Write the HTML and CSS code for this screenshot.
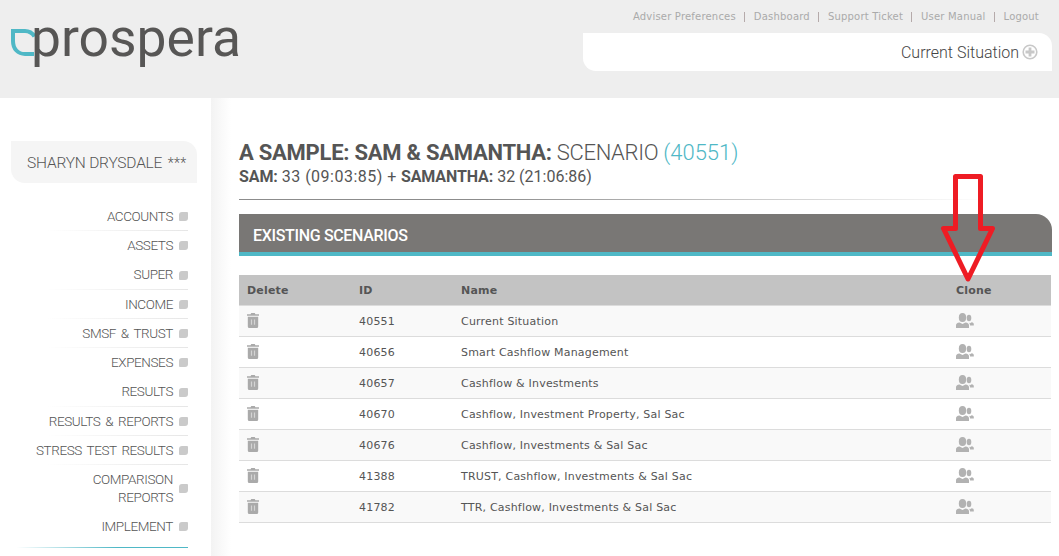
FILE: index.html
```html
<!DOCTYPE html>
<html lang="en">

<head>
    <meta charset="UTF-8">
    <meta name="viewport" content="width=device-width, initial-scale=1.0">
    <title>Prospera - Scenarios</title>
    <link rel="stylesheet" href="styles.css">
</head>

<body>
    <!-- shared icons -->
    <svg class="sprite">
        <symbol id="trash" viewBox="0 0 12 15">
            <path d="M0 1.2h3.6L4.2 0h3.6l.6 1.2H12v1.6H0z M.8 3.8h10.4V13.5a1.5 1.5 0 0 1-1.5 1.5H2.3A1.5 1.5 0 0 1 .8 13.5z" fill="#aaa"/>
            <path d="M4.5 6.5v5.2M7.5 6.5v5.2" stroke="#d4d4d4" stroke-width="1.2"/>
        </symbol>
        <symbol id="people" viewBox="0 0 18 15">
            <g fill="#b2b2b2">
                <ellipse cx="6.5" cy="4.5" rx="3.7" ry="4.5"/>
                <ellipse cx="13" cy="5" rx="2.3" ry="3.3"/>
                <path d="M0 15v-2.600c0-1.800 1-2.600 3.500-2.900l3 1.400 3-1.400c2.400.3 3.500 1.100 3.500 2.900V15z"/>
                <path d="M12.800 9.600l1.200.7 1.700-1c1.500.3 2.100.8 2.100 1.800v1.500h-3.700c-.1-1.200-.4-2.100-1.300-3z"/>
            </g>
        </symbol>
    </svg>

    <div class="header">
        <svg class="logo" width="232" height="60" viewBox="0 0 232 60">
            <path d="M24.500 16.500C22 12.500 19 11 15 11H3v10c0 8 5 13 12 13h9" fill="none" stroke="#4fb8c6" stroke-width="4"/>
            <text x="21" y="36" textLength="210" lengthAdjust="spacingAndGlyphs">prospera</text>
        </svg>
        <div class="header-right">
            <ul class="top-nav">
                <li>Adviser Preferences</li>
                <li>Dashboard</li>
                <li>Support Ticket</li>
                <li>User Manual</li>
                <li>Logout</li>
            </ul>
            <div class="situation">
                <span>Current Situation</span>
                <svg width="16" height="16" viewBox="0 0 16 16" fill="none" stroke="#c8c8c8">
                    <circle cx="8" cy="8" r="6.800" stroke-width="1.600"/>
                    <path d="M8 3.500v9M3.500 8h9" stroke-width="2.800"/>
                </svg>
            </div>
        </div>
    </div>

    <div class="page">
        <div class="sidebar">
            <div class="user">SHARYN DRYSDALE <span>***</span></div>
            <ul class="menu">
                <li class="line">ACCOUNTS</li>
                <li>ASSETS</li>
                <li class="line tall">SUPER</li>
                <li class="line">INCOME</li>
                <li class="line">SMSF &amp; TRUST</li>
                <li>EXPENSES</li>
                <li class="line tall">RESULTS</li>
                <li class="line">RESULTS &amp; REPORTS</li>
                <li class="line">STRESS TEST RESULTS</li>
                <li class="double">COMPARISON<br>REPORTS</li>
                <li>IMPLEMENT</li>
            </ul>
            <div class="menu-end"></div>
        </div>

        <div class="content">
            <h1><b>A SAMPLE: SAM &amp; SAMANTHA:</b> SCENARIO <span>(40551)</span></h1>
            <h2><b>SAM:</b> <span>33 (09:03:85) +</span> <b>SAMANTHA:</b> 32 (21:06:86)</h2>
            <div class="rule"></div>
            <div class="panel-title">EXISTING SCENARIOS</div>
            <table>
                <thead>
                    <tr><th class="delete">Delete</th><th class="id">ID</th><th>Name</th><th class="clone">Clone</th></tr>
                </thead>
                <tbody>
                    <tr><td><svg class="trash"><use href="#trash"/></svg></td><td>40551</td><td>Current Situation</td><td><svg class="people"><use href="#people"/></svg></td></tr>
                    <tr><td><svg class="trash"><use href="#trash"/></svg></td><td>40656</td><td>Smart Cashflow Management</td><td><svg class="people"><use href="#people"/></svg></td></tr>
                    <tr><td><svg class="trash"><use href="#trash"/></svg></td><td>40657</td><td>Cashflow &amp; Investments</td><td><svg class="people"><use href="#people"/></svg></td></tr>
                    <tr><td><svg class="trash"><use href="#trash"/></svg></td><td>40670</td><td>Cashflow, Investment Property, Sal Sac</td><td><svg class="people"><use href="#people"/></svg></td></tr>
                    <tr><td><svg class="trash"><use href="#trash"/></svg></td><td>40676</td><td>Cashflow, Investments &amp; Sal Sac</td><td><svg class="people"><use href="#people"/></svg></td></tr>
                    <tr><td><svg class="trash"><use href="#trash"/></svg></td><td>41388</td><td>TRUST, Cashflow, Investments &amp; Sal Sac</td><td><svg class="people"><use href="#people"/></svg></td></tr>
                    <tr><td><svg class="trash"><use href="#trash"/></svg></td><td>41782</td><td>TTR, Cashflow, Investments &amp; Sal Sac</td><td><svg class="people"><use href="#people"/></svg></td></tr>
                </tbody>
            </table>
        </div>
    </div>

    <!-- arrow pointing at the Clone column -->
    <svg class="arrow" width="56" height="112" viewBox="0 0 56 112">
        <path d="M15.500 4.500h25v52h12L28 107 3.500 56.500h12z" fill="none" stroke="#ee1c24" stroke-width="5" stroke-linejoin="round"/>
    </svg>
</body>

</html>
```
FILE: styles.css
```css
* {
    box-sizing: border-box;
}

body {
    margin: 0;
    height: 556px;
    overflow: hidden;
    position: relative;
    background: #fff;
    color: #555;
    font-family: "DejaVu Sans", Verdana, sans-serif;
    font-size: 11px;
}

ul {
    list-style: none;
    margin: 0;
    padding: 0;
}

.sprite {
    display: none;
}

.header {
    display: flex;
    justify-content: space-between;
    height: 98px;
    padding: 0 7px 0 10px;
    background: #eee;
}

.logo {
    margin-top: 20px;
    overflow: visible;
}

.logo text {
    font-family: Roboto, sans-serif;
    font-size: 51px;
    fill: #575655;
}

.header-right {
    width: 469px;
}

.top-nav {
    display: flex;
    justify-content: flex-end;
    height: 33px;
    padding: 11px 13px 0 0;
    font-size: 10px;
    line-height: 12px;
    letter-spacing: 0.2px;
    color: #aaa;
}

.top-nav li + li {
    margin-left: 8px;
    padding-left: 10px;
    background: linear-gradient(#b5aaaa, #b5aaaa) 0 1px / 1px 10px no-repeat;
}

.situation {
    display: flex;
    align-items: center;
    justify-content: flex-end;
    gap: 3px;
    height: 38px;
    padding-right: 14px;
    background: #fff;
    border-radius: 0 13px 0 13px;
    font: 300 16px Roboto, sans-serif;
    color: #444;
}

.page {
    display: flex;
    height: 458px;
}

.sidebar {
    width: 211px;
    padding: 43px 0 0 11px;
    font-family: Roboto, sans-serif;
    font-weight: 300;
}

.user {
    width: 186px;
    height: 42px;
    padding-left: 16px;
    background: #f5f5f5;
    border-radius: 0 14px 0 14px;
    font-size: 15.5px;
    line-height: 44px;
    letter-spacing: -0.2px;
    white-space: nowrap;
}

.user span {
    margin-left: 2px;
    letter-spacing: 0.3px;
    font-size: 14px;
}

.menu {
    width: 177px;
    margin-top: 19px;
    font-size: 13.5px;
    line-height: 18px;
    letter-spacing: -0.4px;
    word-spacing: 2px;
    text-align: right;
}

.menu li {
    display: flex;
    align-items: center;
    justify-content: flex-end;
    gap: 6px;
    height: 29px;
    padding-bottom: 2px;
}

.menu li::after {
    content: "";
    position: relative;
    top: 1px;
    width: 9px;
    height: 9px;
    background: #cacaca;
    border-radius: 3px 1px 3px 1px;
}

.menu .line {
    background: linear-gradient(90deg, #fff 20%, #e6e6e6) bottom / 100% 1px no-repeat;
}

.menu .tall {
    height: 30px;
}

.menu .double {
    height: 47px;
}

.menu-end {
    width: 177px;
    height: 1px;
    margin-top: 6px;
    background: linear-gradient(90deg, #fff 3%, #4fb8c6 60%);
}

.content {
    flex: 1;
    padding: 41px 7px 0 28px;
    background: linear-gradient(90deg, #f3f3f3, #fff) left / 20px 100% no-repeat;
}

h1, h2 {
    margin: 0;
    font-family: Roboto, sans-serif;
    white-space: nowrap;
}

h1 b, h2 b {
    font-weight: 700;
}

h1 {
    height: 26px;
    font-size: 22px;
    font-weight: 300;
    line-height: 27px;
    letter-spacing: -0.35px;
}

h1 b {
    letter-spacing: -0.25px;
}

h1 span {
    color: #4fb8c6;
    letter-spacing: 0;
}

h2 {
    height: 24px;
    font-size: 16px;
    font-weight: 400;
    line-height: 23px;
}

h2 b {
    letter-spacing: -0.1px;
}

h2 span {
    letter-spacing: 0.5px;
}

.rule {
    height: 1px;
    margin-top: 10px;
    background: linear-gradient(90deg, #8c8c8c 30%, #fff 92%);
}

.panel-title {
    height: 42px;
    margin-top: 14px;
    padding-left: 14px;
    background: #797775;
    border-bottom: 4px solid #4fb8c6;
    border-radius: 0 16px 0 0;
    color: #fff;
    font: 500 16px/43px Roboto, sans-serif;
    letter-spacing: -0.33px;
}

table {
    width: 812px;
    margin-top: 19px;
    border-collapse: separate;
    border-spacing: 0;
    table-layout: fixed;
}

th, td {
    height: 31px;
    padding: 0 0 0 8px;
    border-bottom: 1px solid #dcdcdc;
    text-align: left;
    letter-spacing: 0.2px;
}

th {
    background: #c3c3c3;
}

tbody tr:nth-child(odd) {
    background: #f9f9f9;
}

.delete {
    width: 112px;
}

.id {
    width: 102px;
}

.clone {
    width: 103px;
}

td svg {
    display: block;
    margin-bottom: 2px;
}

.trash {
    width: 12px;
    height: 15px;
}

.people {
    width: 18px;
    height: 15px;
}

.arrow {
    position: absolute;
    left: 940px;
    top: 172px;
}
```
